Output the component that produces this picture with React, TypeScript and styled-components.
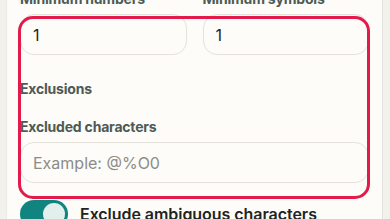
import React from 'react';
import styled, { createGlobalStyle } from 'styled-components';

const GlobalStyle = createGlobalStyle`
  html, body {
    margin: 0;
    padding: 0;
    background: #f2f1ec;
    overflow: hidden;
  }
  body {
    font-family: Inter, "Liberation Sans", sans-serif;
  }
`;

const Page = styled.div`
  width: 390px;
  height: 219px;
  overflow: hidden;
  display: flex;
`;

const Card = styled.div`
  margin-left: 6px;
  width: 377px;
  box-sizing: border-box;
  padding: 0 13px 0 13px;
  background: #fdfcf8;
  border-left: 1px solid #ebe9e3;
  border-right: 1px solid #e6e4de;
  display: flex;
  flex-direction: column;
  margin-top: -11px;
`;

const Label = styled.div<{ $gap?: number }>`
  font-size: 14px;
  line-height: 20px;
  font-weight: 700;
  letter-spacing: -0.2px;
  color: #4e5a56;
  margin-top: ${(p) => p.$gap ?? 0}px;
`;

const Highlighted = styled.div`
  position: relative;
  display: flex;
  flex-direction: column;
`;

const Outline = styled.div`
  position: absolute;
  top: 2px;
  left: -2px;
  right: -1px;
  bottom: -16px;
  border: 3px solid #e41a4b;
  border-radius: 15px;
  pointer-events: none;
`;

const FieldRow = styled.div`
  display: grid;
  grid-template-columns: 1fr 1fr;
  column-gap: 16px;
`;

const LabelRow = styled(FieldRow)`
  margin-bottom: 5px;
`;

const Input = styled.input<{ $gap?: number }>`
  box-sizing: border-box;
  width: 100%;
  height: 41px;
  margin-top: ${(p) => p.$gap ?? 0}px;
  border: 1px solid #e4e2da;
  border-radius: 14px;
  background: #fdfcf8;
  padding: 0 12px;
  font-family: Inter, "Liberation Sans", sans-serif;
  font-size: 16px;
  color: #1f2321;
  outline: none;
  &::placeholder {
    color: #8c8c89;
  }
`;

const ToggleRow = styled.label`
  display: flex;
  align-items: center;
  gap: 12px;
  margin-top: 17px;
`;

const Track = styled.span<{ $on: boolean }>`
  position: relative;
  flex: none;
  width: 48px;
  height: 28px;
  border-radius: 14px;
  background: ${(p) => (p.$on ? '#10857f' : '#cfcdc6')};
`;

const Knob = styled.span<{ $on: boolean }>`
  position: absolute;
  top: 3px;
  left: ${(p) => (p.$on ? 23 : 3)}px;
  width: 22px;
  height: 22px;
  border-radius: 50%;
  background: #e3efed;
`;

const ToggleText = styled.span`
  font-size: 16px;
  font-weight: 600;
  color: #1f2321;
  letter-spacing: -0.05px;
`;

export default function App() {
  return (
    <>
      <GlobalStyle />
      <Page>
        <Card>
          <LabelRow>
            <Label>Minimum numbers</Label>
            <Label>Minimum symbols</Label>
          </LabelRow>
          <Highlighted>
            <Outline />
            <FieldRow>
              <Input defaultValue="1" />
              <Input defaultValue="1" />
            </FieldRow>
            <Label $gap={24}>Exclusions</Label>
            <Label $gap={18}>Excluded characters</Label>
            <Input $gap={5} placeholder="Example: @%O0" />
          </Highlighted>
          <ToggleRow>
            <Track $on>
              <Knob $on />
            </Track>
            <ToggleText>Exclude ambiguous characters</ToggleText>
          </ToggleRow>
        </Card>
      </Page>
    </>
  );
}
